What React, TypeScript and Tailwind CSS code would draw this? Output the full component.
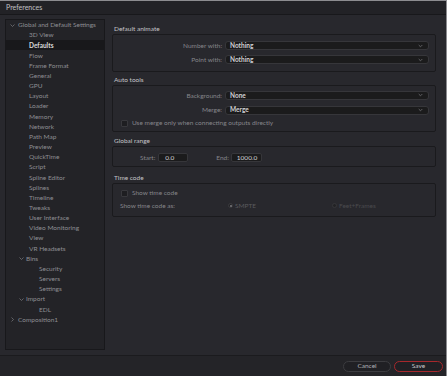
import React from 'react';

const font = { fontFamily: 'Lato, "Open Sans", sans-serif' };

type Node = { label: string; depth: number; caret?: 'open' | 'closed'; selected?: boolean };

const tree: Node[] = [
  { label: 'Global and Default Settings', depth: 0, caret: 'open' },
  { label: '3D View', depth: 1 },
  { label: 'Defaults', depth: 1, selected: true },
  { label: 'Flow', depth: 1 },
  { label: 'Frame Format', depth: 1 },
  { label: 'General', depth: 1 },
  { label: 'GPU', depth: 1 },
  { label: 'Layout', depth: 1 },
  { label: 'Loader', depth: 1 },
  { label: 'Memory', depth: 1 },
  { label: 'Network', depth: 1 },
  { label: 'Path Map', depth: 1 },
  { label: 'Preview', depth: 1 },
  { label: 'QuickTime', depth: 1 },
  { label: 'Script', depth: 1 },
  { label: 'Spline Editor', depth: 1 },
  { label: 'Splines', depth: 1 },
  { label: 'Timeline', depth: 1 },
  { label: 'Tweaks', depth: 1 },
  { label: 'User Interface', depth: 1 },
  { label: 'Video Monitoring', depth: 1 },
  { label: 'View', depth: 1 },
  { label: 'VR Headsets', depth: 1 },
  { label: 'Bins', depth: 1, caret: 'open' },
  { label: 'Security', depth: 2 },
  { label: 'Servers', depth: 2 },
  { label: 'Settings', depth: 2 },
  { label: 'Import', depth: 1, caret: 'open' },
  { label: 'EDL', depth: 2 },
  { label: 'Composition1', depth: 0, caret: 'closed' },
];

function Caret({ open }: { open: boolean }) {
  return (
    <svg width="5" height="5" viewBox="0 0 5 5" className="shrink-0">
      {open ? (
        <path d="M0.5 1.5 L2.5 3.5 L4.5 1.5" fill="none" stroke="#7e7e82" strokeWidth="0.7" />
      ) : (
        <path d="M1.5 0.5 L3.5 2.5 L1.5 4.5" fill="none" stroke="#7e7e82" strokeWidth="0.7" />
      )}
    </svg>
  );
}

function TreeRow({ node }: { node: Node }) {
  // text x: depth0 = 18, depth1 = 28 (24 with caret), depth2 = 38
  let pad = 'pl-[13px]';
  if (node.depth === 1) pad = node.caret ? 'pl-[14px]' : 'pl-[23px]';
  if (node.depth === 2) pad = 'pl-[33px]';
  return (
    <div
      className={`h-[10.17px] flex items-center whitespace-nowrap ${pad} ${
        node.selected ? 'bg-[#18181b] text-[#d8d8da] font-bold' : 'text-[#8e8e93]'
      }`}
    >
      {node.caret && (
        <span className={node.depth === 0 ? 'mr-[3px] -ml-[9px] ' : 'mr-[2px] -ml-[1px]'}>
          <Caret open={node.caret === 'open'} />
        </span>
      )}
      {node.label}
    </div>
  );
}

function Dropdown({ value }: { value: string }) {
  return (
    <div className="flex-1 h-[9px] rounded-[3px] bg-[#1b1b1c] border border-[#36363a] flex items-center justify-between pl-[4px] pr-[5px] text-[#d2d2d4] font-bold">
      <span>{value}</span>
      <svg width="5" height="4" viewBox="0 0 5 4">
        <path d="M0.7 1 L2.5 2.8 L4.3 1" fill="none" stroke="#7e7e82" strokeWidth="0.7" />
      </svg>
    </div>
  );
}

function LabeledDropdown({ label, value }: { label: string; value: string }) {
  return (
    <div className="flex items-center gap-[3px] pr-[6px]">
      <div className="w-[109px] text-right text-[#85858a]">{label}</div>
      <Dropdown value={value} />
    </div>
  );
}

function Checkbox() {
  return <div className="w-[7px] h-[7px] rounded-[1px] bg-[#1e1e21] border border-[#38383c] shrink-0" />;
}

function Heading({ text, mt }: { text: string; mt: string }) {
  return <div className={`h-[11px] leading-[11px] pl-[2px] text-[#c4c4c8] ${mt}`}>{text}</div>;
}

export default function App() {
  return (
    <div
      className="w-[447px] h-[376px] bg-[#28282d] flex flex-col border-t border-r border-[#8c8c90] text-[6.5px] overflow-hidden"
      style={font}
    >
      {/* title bar */}
      <div className="h-[14px] shrink-0 bg-[#222226] border-b border-[#18181b] flex items-center pl-[6px] text-[#c0c0c4] text-[7px]">
        Preferences
      </div>

      <div className="flex flex-1 pl-[5px] pt-[4px] pb-[5px] min-h-0">
        {/* sidebar tree */}
        <div className="w-[100px] shrink-0 bg-[#232327] border border-[#18181b] pt-[0px]">
          {tree.map((n) => (
            <TreeRow key={n.label} node={n} />
          ))}
        </div>

        {/* settings */}
        <div className="flex-1 pl-[7px] pr-[10px] flex flex-col">
          <Heading text="Default animate" mt="mt-[4px]" />
          <div className="border border-[#1a1a1d] rounded-[2px] pt-[6px] pb-[6px] flex flex-col gap-[4px]">
            <LabeledDropdown label="Number with:" value="Nothing" />
            <LabeledDropdown label="Point with:" value="Nothing" />
          </div>

          <Heading text="Auto tools" mt="mt-[2px]" />
          <div className="border border-[#1a1a1d] rounded-[2px] pt-[5px] pb-[4px] flex flex-col">
            <LabeledDropdown label="Background:" value="None" />
            <div className="mt-[5px]">
              <LabeledDropdown label="Merge:" value="Merge" />
            </div>
            <div className="mt-[4px] h-[8px] flex items-center gap-[4px] pl-[8px] text-[#85858a]">
              <Checkbox />
              <span>Use merge only when connecting outputs directly</span>
            </div>
          </div>

          <Heading text="Global range" mt="mt-[3px]" />
          <div className="border border-[#1a1a1d] rounded-[2px] pt-[6px] pb-[3px] flex items-center pl-[27px] text-[#85858a]">
            <span>Start:</span>
            <div className="ml-[3px] w-[30px] h-[9px] bg-[#1b1b1c] border border-[#36363a] rounded-[2px] flex items-center pl-[6px] text-[#d2d2d4]">
              0.0
            </div>
            <span className="ml-[28px]">End:</span>
            <div className="ml-[2px] w-[31px] h-[9px] bg-[#1b1b1c] border border-[#36363a] rounded-[2px] flex items-center pl-[5px] text-[#d2d2d4]">
              1000.0
            </div>
          </div>

          <Heading text="Time code" mt="mt-[5px]" />
          <div className="border border-[#1a1a1d] rounded-[2px] pt-[6px] pb-[6px] flex flex-col">
            <div className="h-[7px] flex items-center gap-[4px] pl-[8px] text-[#85858a]">
              <Checkbox />
              <span>Show time code</span>
            </div>
            <div className="mt-[5px] h-[8px] flex items-center pl-[7px] text-[#85858a]">
              <span className="w-[108px]">Show time code as:</span>
              <span className="w-[5px] h-[5px] rounded-full bg-[#222225] border border-[#3a3a3e] flex items-center justify-center">
                <span className="w-[2px] h-[2px] rounded-full bg-[#7a7a7e]" />
              </span>
              <span className="ml-[2px] w-[97px] text-[#5a5a5e]">SMPTE</span>
              <span className="w-[5px] h-[5px] rounded-full bg-[#222225] border border-[#36363a]" />
              <span className="ml-[2px] text-[#4a4a4e]">Feet+Frames</span>
            </div>
          </div>
        </div>
      </div>

      {/* footer */}
      <div className="h-[21px] shrink-0 bg-[#242428] border-t border-[#1b1b1e] flex items-center justify-end gap-[3px] pr-[3px]">
        <div className="w-[48px] h-[11px] rounded-full border border-[#3c3c40] bg-[#202024] flex items-center justify-center text-[#b0b0b4]">
          Cancel
        </div>
        <div className="w-[49px] h-[11px] rounded-full border border-[#a6282c] bg-[#202024] flex items-center justify-center text-[#c8c8cc]">
          Save
        </div>
      </div>
    </div>
  );
}
